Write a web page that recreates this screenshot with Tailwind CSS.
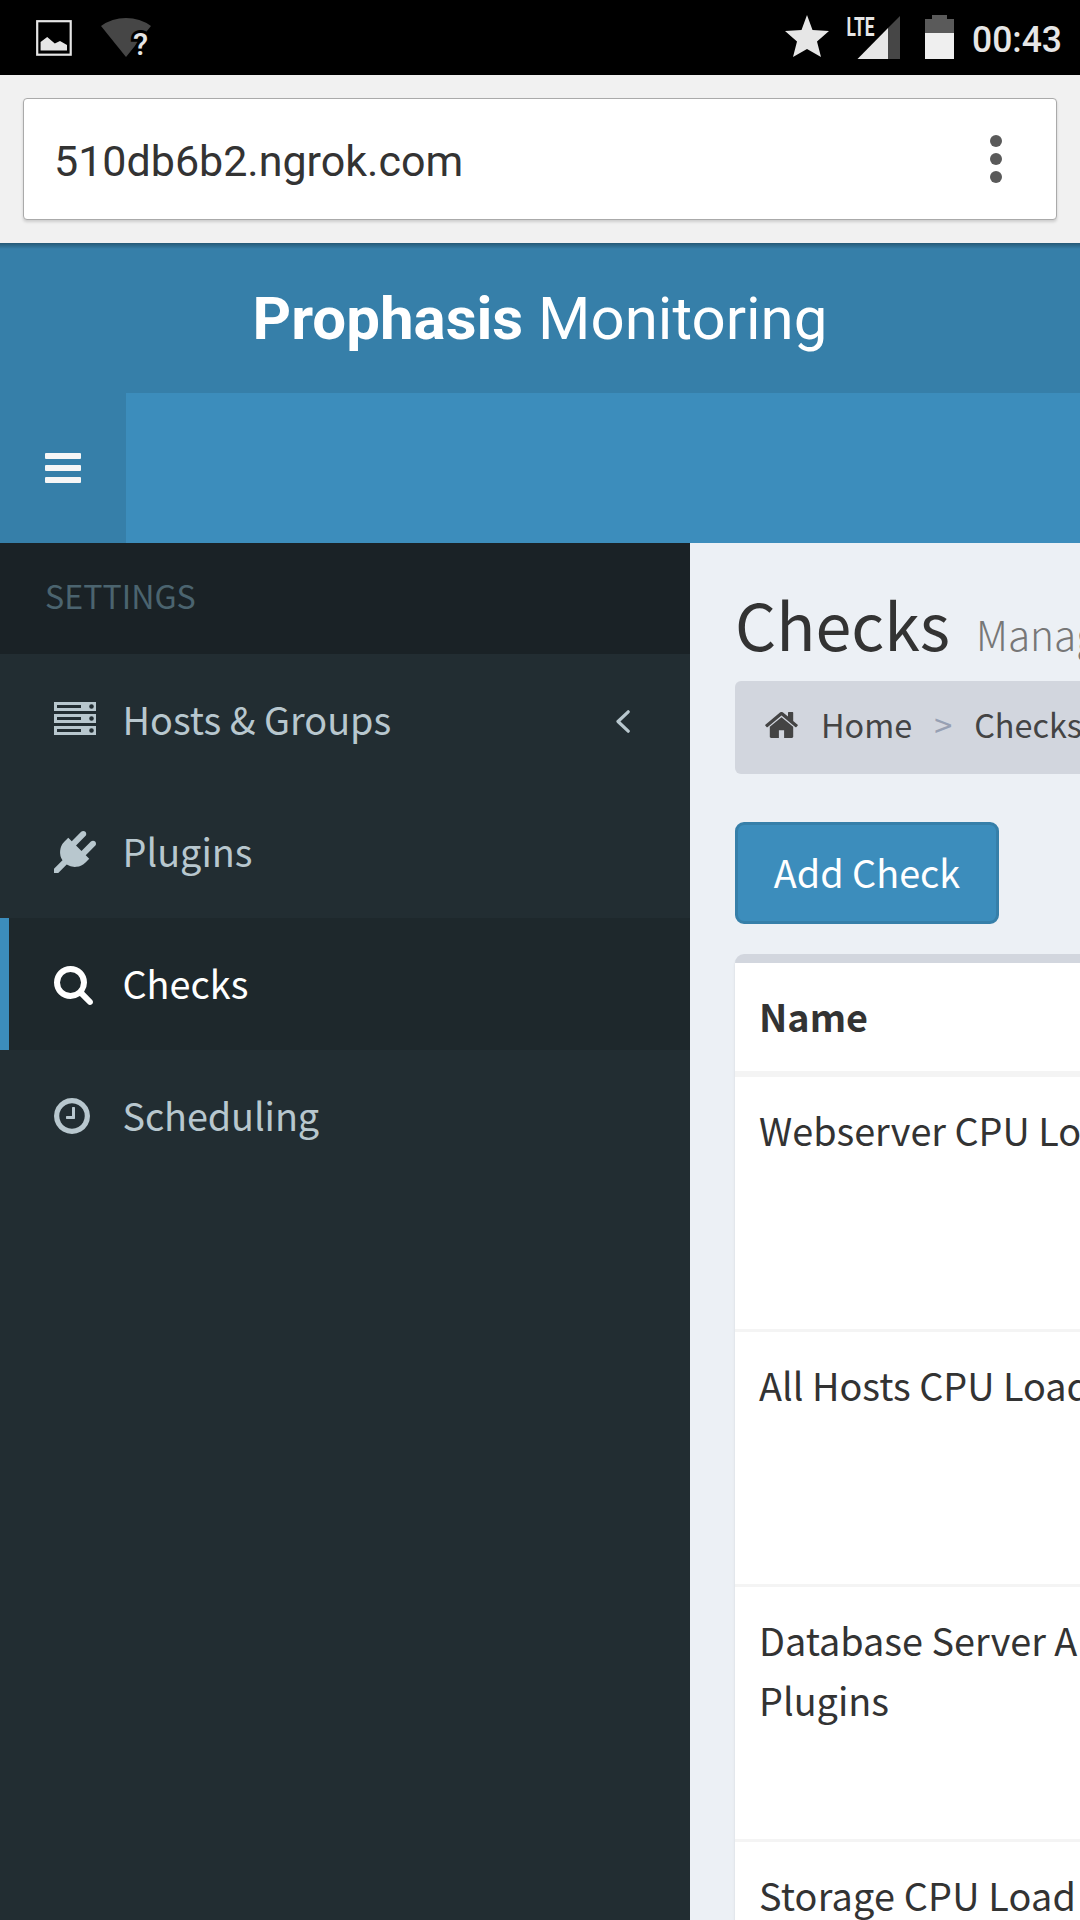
<!DOCTYPE html>
<html lang="en">
<head>
<meta charset="utf-8">
<title>Prophasis Monitoring</title>
<script src="https://cdn.jsdelivr.net/npm/@tailwindcss/browser@4"></script>
</head>
<body class="w-[1080px] h-[1920px] overflow-hidden bg-[#ecf0f5] font-['Noto_Sans_CJK_SC','Source_Sans_Pro',sans-serif] text-[37.8px] leading-[60px] text-[#333]">
<div class="flex h-[1920px] w-[1080px] flex-col overflow-hidden">

  <!-- Status bar -->
  <div class="h-[75px] shrink-0 bg-black font-[Roboto,sans-serif]">
    <svg class="block" width="1080" height="75" viewBox="0 0 1080 75">
      <rect x="37.200" y="21.200" width="33.500" height="33.500" fill="none" stroke="#e6e6e6" stroke-width="2.2"/>
      <path d="M40.600 42 47.200 37 54.800 43.500 60 41 67 45v5.500H40.600z" fill="#e6e6e6"/>
      <path d="M101 26Q112 18 126 18t25 8L126 57z" fill="#464646"/>
      <text x="133" y="55" font-size="31" font-weight="500" fill="#e6e6e6" stroke="#000" stroke-width="6" paint-order="stroke">?</text>
      <path d="M807 15 812.500 30 829 31 817 41.500 821 57 807 49 793 57 797 41.500 785 31 801.500 30z" fill="#e6e6e6"/>
      <text x="846.500" y="35.500" font-size="26" font-weight="700" fill="#e6e6e6" textLength="28" lengthAdjust="spacingAndGlyphs">LTE</text>
      <path d="M857.500 59 888 28V59z" fill="#e6e6e6"/>
      <path d="M888 28 900 16V59H888z" fill="#464646"/>
      <path d="M925 33V19h7V15h15v4h7V33z" fill="#5a5a5a"/>
      <path d="M925 33h29V59H925z" fill="#efefef"/>
      <text x="972" y="52" font-size="36" font-weight="500" fill="#e6e6e6" textLength="90" lengthAdjust="spacingAndGlyphs">00:43</text>
    </svg>
  </div>

  <!-- Browser toolbar -->
  <div class="h-[168px] shrink-0 bg-[#f1f1f1] px-[23px] pt-[23px]">
    <div class="flex h-[122px] items-center justify-between rounded-[4px] border border-[#aaa] bg-white pl-[30px] pr-[54px] shadow-[0_2px_3px_rgba(0,0,0,0.15)]">
      <span class="pt-1 font-[Roboto,sans-serif] text-[43px] leading-[60px] text-[#333]">510db6b2.ngrok.com</span>
      <div class="flex flex-col gap-[6px] pb-[1px]">
        <div class="size-3 rounded-full bg-[#5a5a5a]"></div>
        <div class="size-3 rounded-full bg-[#5a5a5a]"></div>
        <div class="size-3 rounded-full bg-[#5a5a5a]"></div>
      </div>
    </div>
  </div>

  <!-- Header -->
  <header class="shrink-0">
    <div class="h-[150px] bg-[#367fa9] bg-[linear-gradient(to_bottom,rgba(0,0,0,0.3),transparent_6px)] text-center font-[Roboto,sans-serif] text-[60px] leading-[152px] text-white"><b class="font-bold">Prophasis</b> Monitoring</div>
    <nav class="flex h-[150px] bg-[#3c8dbc]">
      <div class="flex w-[126px] flex-col items-center justify-center gap-[6px] bg-[#367fa9]">
        <div class="h-[6px] w-9 rounded-[1px] bg-[#f6f6f6]"></div>
        <div class="h-[6px] w-9 rounded-[1px] bg-[#f6f6f6]"></div>
        <div class="h-[6px] w-9 rounded-[1px] bg-[#f6f6f6]"></div>
      </div>
    </nav>
  </header>

  <div class="flex min-h-0 flex-1">
    <!-- Sidebar -->
    <aside class="w-[690px] shrink-0 bg-[#222d32] text-[#b8c7ce]">
      <div class="h-[111px] bg-[#1a2226] pl-[45px] pt-[22px] text-[32.2px] text-[#4b646f]">SETTINGS</div>
      <div class="flex h-[132px] items-center border-l-[9px] border-transparent pl-[45px] pr-[60px]">
        <div class="w-[68.5px] pb-[3px]">
          <svg width="42" height="33" viewBox="0 0 42 33" fill="currentColor" fill-rule="evenodd">
            <path d="M0 0H42V9H0zM3 3V6H27V3zM37.500 2.200a2.300 2.300 0 1 0 0 4.600a2.300 2.300 0 1 0 0-4.600z"/>
            <path d="M0 12H42V21H0zM3 15V18H27V15zM37.500 14.200a2.300 2.300 0 1 0 0 4.600a2.300 2.300 0 1 0 0-4.600z"/>
            <path d="M0 24H42V33H0zM3 27V30H27V27zM37.500 26.200a2.300 2.300 0 1 0 0 4.600a2.300 2.300 0 1 0 0-4.600z"/>
          </svg>
        </div>
        <span class="flex-1 pb-[3px]">Hosts &amp; Groups</span>
        <svg class="mt-[2px]" width="14" height="23" viewBox="0 0 14 23" fill="none" stroke="currentColor" stroke-width="3.200" stroke-linecap="round" stroke-linejoin="round"><path d="M12.200 1.800 2 11.500 12.200 21.200"/></svg>
      </div>
      <div class="flex h-[132px] items-center border-l-[9px] border-transparent pl-[45px]">
        <div class="w-[68.5px]">
          <svg width="42" height="42" viewBox="0 0 1792 1792" fill="currentColor"><path d="M1755 453q37 38 37 90.500t-37 90.500l-401 400 150 150-160 160q-163 163-389.500 186.500t-411.500-100.500l-362 362h-181v-181l362-362q-124-185-100.500-411.500t186.500-389.500l160-160 150 150 400-401q38-37 91-37t90 37 37 90.500-37 90.500l-400 401 234 234 401-400q38-37 91-37t90 37z"/></svg>
        </div>
        <span class="pb-[3px]">Plugins</span>
      </div>
      <div class="flex h-[132px] items-center border-l-[9px] border-[#3c8dbc] bg-[#1e282c] pl-[45px] text-white">
        <div class="w-[68.5px] pt-[3px]">
          <svg width="39" height="39" viewBox="64 128 1664 1664" fill="currentColor"><path d="M1216 832q0-185-131.500-316.500t-316.500-131.500-316.500 131.500-131.500 316.500 131.500 316.500 316.500 131.500 316.500-131.500 131.500-316.500zm512 832q0 52-38 90t-90 38q-54 0-90-38l-343-342q-179 124-399 124-143 0-273.500-55.500t-225-150-150-225-55.500-273.500 55.500-273.500 150-225 225-150 273.500-55.500 273.500 55.500 225 150 150 225 55.500 273.500q0 220-124 399l343 343q37 37 37 90z"/></svg>
        </div>
        <span class="pb-[3px]">Checks</span>
      </div>
      <div class="flex h-[132px] items-center border-l-[9px] border-transparent pl-[45px]">
        <div class="w-[68.5px]">
          <svg width="36" height="36" viewBox="128 128 1536 1536" fill="currentColor"><path d="M1024 544v448q0 14-9 23t-23 9h-320q-14 0-23-9t-9-23v-64q0-14 9-23t23-9h224v-352q0-14 9-23t23-9h64q14 0 23 9t9 23zm416 352q0-148-73-273t-198-198-273-73-273 73-198 198-73 273 73 273 198 198 273 73 273-73 198-198 73-273zm224 0q0 209-103 385.500t-279.500 279.500-385.500 103-385.500-103-279.500-279.500-103-385.500 103-385.500 279.500-279.500 385.500-103 385.500 103 279.500 279.500 103 385.500z"/></svg>
        </div>
        <span class="pb-[3px] tracking-[-0.1px]">Scheduling</span>
      </div>
    </aside>

    <!-- Content -->
    <main class="min-w-0 flex-1 overflow-hidden whitespace-nowrap pl-[45px]">
      <h1 class="flex h-[138px] items-baseline gap-[26px] pt-[40px] text-[64.600px] leading-[80px]">Checks <small class="text-[40.5px] font-light text-[#777]">Manage</small></h1>
      <div class="flex h-[93px] w-[500px] items-center rounded-[6px] bg-[#d2d6de] pl-[30px] text-[32.4px] text-[#444]">
        <svg class="mb-[6px] mr-[23px] shrink-0" width="33" height="26" viewBox="90 256 1612 1280" fill="currentColor"><path d="M1472 992v480q0 26-19 45t-45 19h-384v-384h-256v384h-384q-26 0-45-19t-19-45v-480q0-1 .5-3t.5-3l575-474 575 474q1 2 1 6zm223-69l-62 74q-8 9-21 11h-3q-13 0-21-7l-692-577-692 577q-12 8-24 7-13-2-21-11l-62-74q-8-10-7-23.500t11-21.500l719-599q32-26 76-26t76 26l244 204v-195q0-14 9-23t23-9h192q14 0 23 9t9 23v408l219 182q10 8 11 21.500t-7 23.500z"/></svg>
        <span class="pb-[7px]">Home</span>
        <span class="px-[22px] pb-[7px] text-[#97a0b3]">&gt;</span>
        <span class="pb-[7px]">Checks</span>
      </div>
      <div class="mt-12 flex h-[102px] w-[264px] items-center justify-center rounded-[9px] border-[3px] border-[#367fa9] bg-[#3c8dbc] pb-[3px] text-white">Add Check</div>
      <div class="mt-[30px] w-[700px] rounded-t-[9px] border-t-[9px] border-[#d2d6de] bg-white shadow-[0_3px_3px_rgba(0,0,0,0.1)]">
        <div class="h-[114px] border-b-[6px] border-[#f4f4f4] pl-6 pt-[23px] font-bold">Name</div>
        <div class="h-[255px] border-b-[3px] border-[#f4f4f4] pl-6 pt-[23px]">Webserver CPU Load</div>
        <div class="h-[255px] border-b-[3px] border-[#f4f4f4] pl-6 pt-[23px]">All Hosts CPU Load</div>
        <div class="h-[255px] border-b-[3px] border-[#f4f4f4] pl-6 pt-[23px]">Database Server All<br>Plugins</div>
        <div class="h-[255px] pl-6 pt-[23px] tracking-[0.2px]">Storage CPU Load</div>
      </div>
    </main>
  </div>
</div>
</body>
</html>
